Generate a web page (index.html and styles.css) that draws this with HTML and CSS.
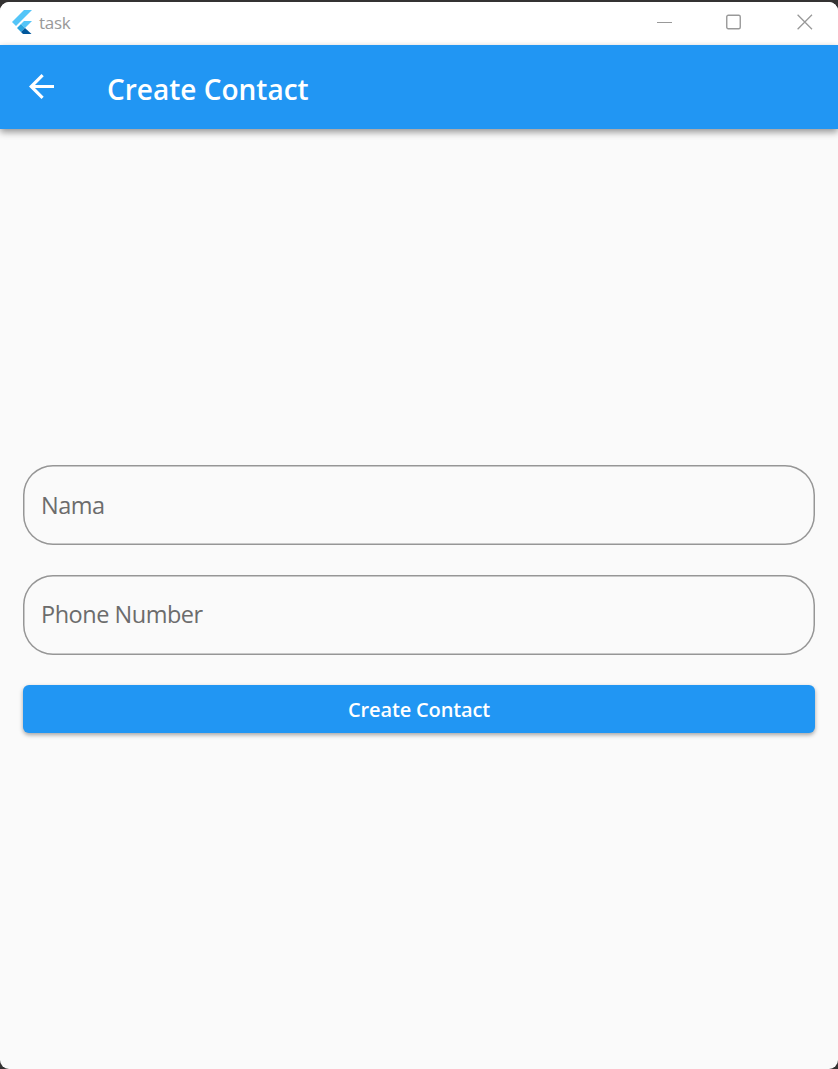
FILE: index.html
```html
<!DOCTYPE html>
<html lang="en">
<head>
<meta charset="utf-8">
<title>task</title>
<link rel="stylesheet" href="styles.css">
</head>
<body>
<div class="window">
  <header class="titlebar">
    <svg class="logo" width="20" height="24" viewBox="0 0 20 24">
      <path fill="#54c5f8" d="M12 0H20L4 16L0 12Z"/>
      <path fill="#54c5f8" d="M12 11H20L13 18L9 14Z"/>
      <path fill="#29a4df" d="M5 18L9 14L13 18L9 22Z"/>
      <path fill="#01579b" d="M9 22L13 18L19.5 24H11Z"/>
    </svg>
    <span class="app-name">task</span>
    <div class="controls">
      <svg width="15" height="16" viewBox="0 0 15 16"><path d="M0 8.5H15"/></svg>
      <svg width="15" height="16" viewBox="0 0 15 16"><rect x=".75" y="1.25" width="13.5" height="13.5" rx="1.5" stroke-width="1.4"/></svg>
      <svg width="16" height="16" viewBox="0 0 16 16"><path stroke-width="1.3" d="M.6 .8L15 15.2M15 .8L.6 15.2"/></svg>
    </div>
  </header>
  <nav class="appbar">
    <svg class="back" width="25" height="25" viewBox="4 4 16 16"><path fill="#fff" d="M20 11H7.83l5.59-5.59L12 4l-8 8 8 8 1.41-1.41L7.83 13H20v-2z"/></svg>
    <h1>Create Contact</h1>
  </nav>
  <main class="form">
    <div class="field"><span>Nama</span></div>
    <div class="field"><span>Phone Number</span></div>
    <button class="submit">Create Contact</button>
  </main>
</div>
</body>
</html>
```
FILE: styles.css
```css
* { box-sizing: border-box; }
body {
  margin: 0;
  height: 1069px;
  padding-top: 2px;
  background: #343232;
  font-family: "Open Sans", "Noto Sans", sans-serif;
  overflow: hidden;
}
.window {
  display: flex;
  flex-direction: column;
  height: 1067px;
  border-radius: 9px;
  overflow: hidden;
  background: #fafafa;
}
.titlebar {
  display: flex;
  align-items: center;
  flex: none;
  height: 43px;
  padding: 0 25px 3px 12px;
  background: #fff;
}
.logo { margin-top: -1px; }
.app-name {
  margin: 2px 0 0 7px;
  font-size: 17px;
  line-height: 24px;
  font-weight: 400;
  letter-spacing: -.3px;
  color: #999;
}
.controls {
  display: flex;
  gap: 55px;
  margin-left: auto;
}
.controls svg {
  fill: none;
  stroke: #999;
}
.controls svg:nth-child(2) { margin-right: 1px; margin-left: -1px; }
.appbar {
  display: flex;
  align-items: center;
  flex: none;
  height: 84px;
  padding: 0 0 1px 29px;
  background: #2196f3;
  box-shadow: 0 3px 7px rgba(0, 0, 0, .42);
}
h1 {
  margin: 5px 0 0 53px;
  font-size: 28px;
  line-height: 38px;
  font-weight: 600;
  color: #fff;
}
.form {
  display: flex;
  flex-direction: column;
  gap: 30px;
  padding: 336.4px 23px 0;
}
.field {
  display: flex;
  align-items: center;
  height: 79.6px;
  padding: 0 0 1px 18px;
  border-radius: 30px;
  box-shadow: inset 0 0 0 1.5px #969696;
  font-size: 23.5px;
  font-weight: 400;
  letter-spacing: -.48px;
  color: #6c6c6c;
}
.submit {
  height: 48px;
  padding: 2px 0 0;
  border: 0;
  border-radius: 6px;
  background: #2196f3;
  box-shadow: 0 2px 4px rgba(0, 0, 0, .35);
  font: 600 20px/27px "Open Sans", "Noto Sans", sans-serif;
  letter-spacing: -.15px;
  color: #fff;
}
```
